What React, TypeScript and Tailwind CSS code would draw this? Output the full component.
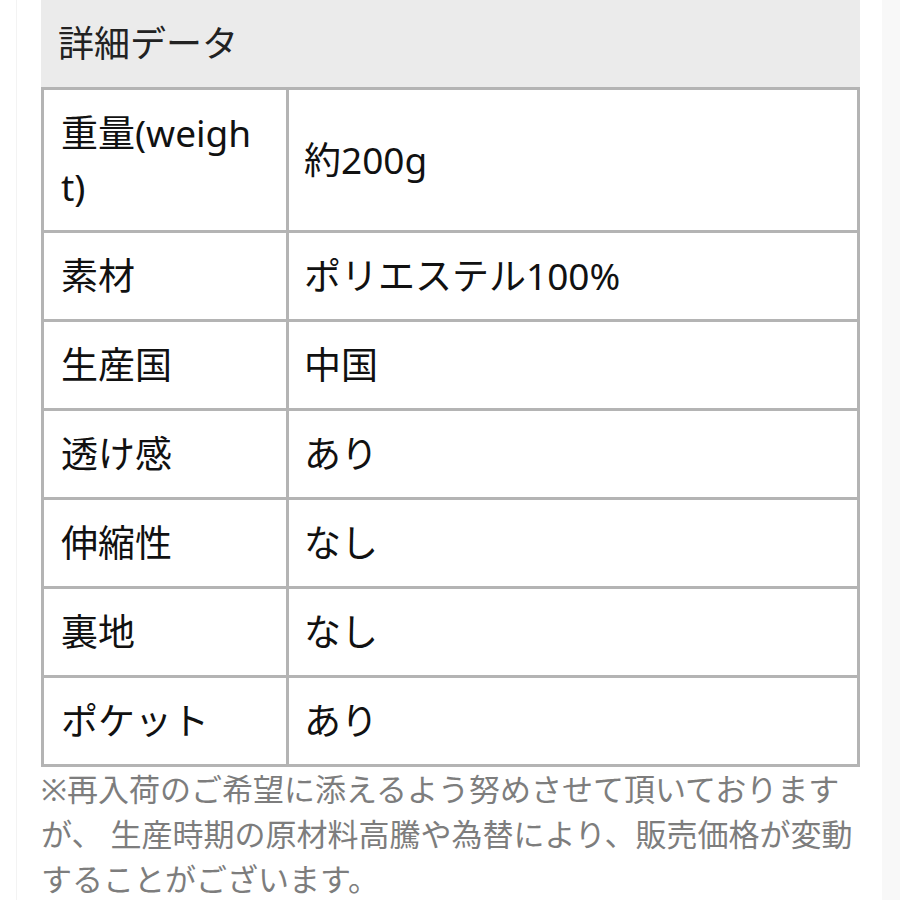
import React from "react";

const rows: [React.ReactNode, string][] = [
  [<>重量(weigh<br />t)</>, "約200g"],
  ["素材", "ポリエステル100%"],
  ["生産国", "中国"],
  ["透け感", "あり"],
  ["伸縮性", "なし"],
  ["裏地", "なし"],
  ["ポケット", "あり"],
];

export default function App() {
  return (
    <div
      className="w-[900px] h-[900px] bg-white overflow-hidden"
      style={{ fontFamily: '"Noto Sans", "Noto Sans CJK JP", sans-serif' }}
    >
      <div className="flex h-full">
        <div className="w-[17px] shrink-0 bg-white border-r border-[#f3f3f3]" />
        <div className="flex-1 bg-white pl-[24px] pr-[22px]">
          <div className="h-[87px] bg-[#ebebeb] flex items-center pl-[17px] text-[36px] text-[#222] leading-none">
            詳細データ
          </div>
          <table className="w-full border-collapse border-2 border-[#8f8f8f] text-[37px] text-[#111] leading-[54px]">
            <tbody>
              {rows.map(([k, v], i) => (
                <tr key={i}>
                  <td className="w-[245px] border-[3px] border-[#b4b4b4] pl-[17px] pr-2 py-[16px] align-middle whitespace-nowrap">
                    {k}
                  </td>
                  <td className="border-[3px] border-[#b4b4b4] pl-[15px] py-[16px] align-middle">
                    {v}
                  </td>
                </tr>
              ))}
            </tbody>
          </table>
          <p className="mt-0 text-[31px] leading-[45px] text-[#7d7d7d] whitespace-nowrap">
            ※再入荷のご希望に添えるよう努めさせて頂いております
            <br />
            が、 生産時期の原材料高騰や為替により、販売価格が変動
            <br />
            することがございます。
          </p>
        </div>
        <div className="w-[18px] shrink-0 bg-[#f8f8f8]" />
      </div>
    </div>
  );
}
